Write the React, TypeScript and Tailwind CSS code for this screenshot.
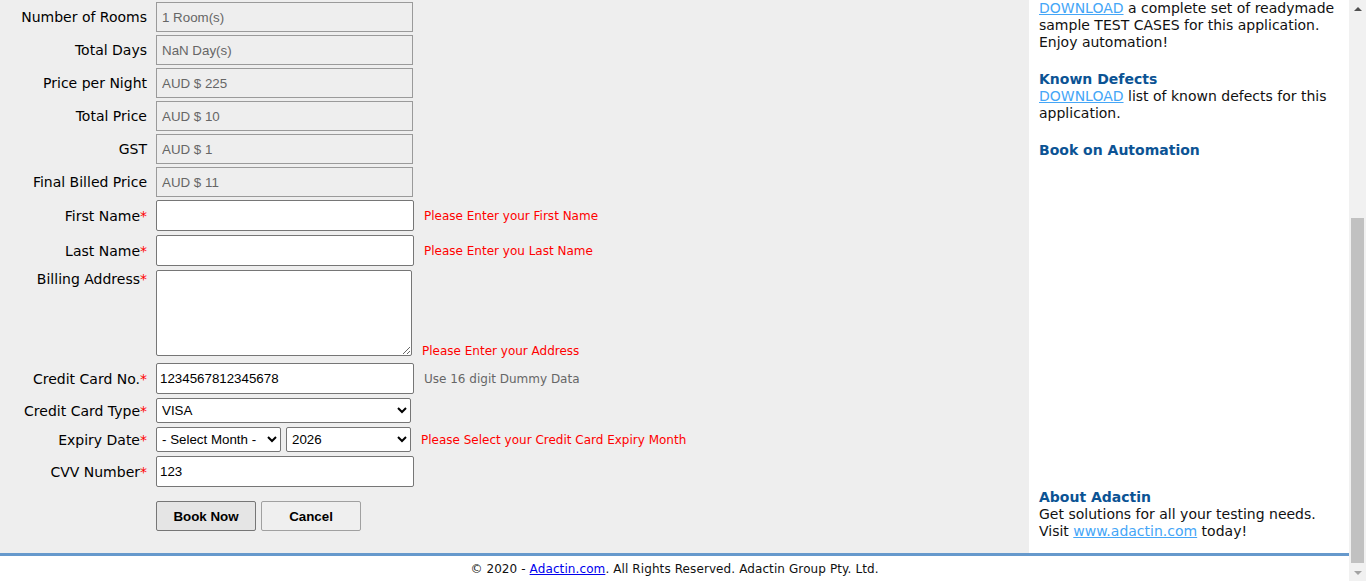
import type { ReactNode } from 'react'

// Booking form page: gray form area on the left, white info column on
// the right, blue rule + footer below, and a classic scrollbar at the edge.

const inputFont = "font-['Liberation_Sans',Arial,sans-serif] text-[13.333px]"

function Label({
  children,
  required,
  className,
}: {
  children: ReactNode
  required?: boolean
  className?: string
}) {
  return (
    <div className={`w-[147px] shrink-0 text-right text-[14px] leading-[17px] text-black ${className ?? ''}`}>
      {children}
      {required && <span className="text-[#ff0000]">*</span>}
    </div>
  )
}

function ReadOnlyRow({ label, value, first }: { label: string; value: string; first?: boolean }) {
  return (
    <div className={`flex items-center gap-[9px] ${first ? '' : 'mt-[3px]'}`}>
      <Label>{label}</Label>
      <input
        readOnly
        value={value}
        className={`h-[30px] w-[257px] border border-[#9a9a9a] bg-[#eeeeee] pl-[5px] text-[#666] outline-none ${inputFont}`}
      />
    </div>
  )
}

function Hint({ children, className }: { children: ReactNode; className?: string }) {
  return <span className={`text-[12px] leading-[15px] ${className ?? ''}`}>{children}</span>
}

const textInput = `h-[31px] w-[258px] rounded-[2px] border border-[#767676] bg-white pl-[3px] text-black outline-none ${inputFont}`
const selectBox = `h-[25px] rounded-[2px] border border-[#767676] bg-white pl-[1px] text-black outline-none ${inputFont}`

function BookingForm() {
  return (
    <div className="flex flex-col pt-[2px]">
      <ReadOnlyRow first label="Number of Rooms" value="1 Room(s)" />
      <ReadOnlyRow label="Total Days" value="NaN Day(s)" />
      <ReadOnlyRow label="Price per Night" value="AUD $ 225" />
      <ReadOnlyRow label="Total Price" value="AUD $ 10" />
      <ReadOnlyRow label="GST" value="AUD $ 1" />
      <ReadOnlyRow label="Final Billed Price" value="AUD $ 11" />

      <div className="mt-[3px] flex items-center gap-[9px]">
        <Label required className="mt-[2px]">First Name</Label>
        <div className="flex items-center">
          <input className={textInput} defaultValue="" />
          <Hint className="ml-[10px] mt-[2px] text-[#ff0000]">Please Enter your First Name</Hint>
        </div>
      </div>

      <div className="mt-[4px] flex items-center gap-[9px]">
        <Label required className="mt-[2px]">Last Name</Label>
        <div className="flex items-center">
          <input className={textInput} defaultValue="" />
          <Hint className="ml-[10px] mt-[2px] text-[#ff0000]">Please Enter you Last Name</Hint>
        </div>
      </div>

      <div className="mt-[4px] flex items-start gap-[9px]">
        <Label required className="pt-[1px]">Billing Address</Label>
        <div className="flex items-end">
          <textarea
            className={`block h-[86px] w-[256px] rounded-[2px] border border-[#767676] bg-white text-black outline-none ${inputFont}`}
          />
          <Hint className="mb-[-3px] ml-[10px] text-[#ff0000]">Please Enter your Address</Hint>
        </div>
      </div>

      <div className="mt-[7px] flex items-center gap-[9px]">
        <Label required className="mt-[2px]">Credit Card No.</Label>
        <div className="flex items-center">
          <input className={textInput} defaultValue="1234567812345678" />
          <Hint className="ml-[10px] mt-[2px] text-[#666]">Use 16 digit Dummy Data</Hint>
        </div>
      </div>

      <div className="mt-[4px] flex items-center gap-[9px]">
        <Label required className="mt-[2px]">Credit Card Type</Label>
        <select className={`${selectBox} w-[255px]`} defaultValue="VISA">
          <option>- Select Credit Card Type -</option>
          <option>American Express</option>
          <option>VISA</option>
          <option>Master Card</option>
          <option>Other</option>
        </select>
      </div>

      <div className="mt-[4px] flex items-center gap-[9px]">
        <Label required className="mt-[2px]">Expiry Date</Label>
        <div className="flex items-center">
          <select className={`${selectBox} w-[125px]`} defaultValue="">
            <option value="">- Select Month -</option>
            <option>January</option>
            <option>February</option>
          </select>
          <select className={`${selectBox} ml-[5px] w-[125px]`} defaultValue="2026">
            <option>- Select Year -</option>
            <option>2026</option>
            <option>2027</option>
          </select>
          <Hint className="ml-[10px] mt-[2px] text-[#ff0000]">Please Select your Credit Card Expiry Month</Hint>
        </div>
      </div>

      <div className="mt-[4px] flex items-center gap-[9px]">
        <Label required className="mt-[2px]">CVV Number</Label>
        <input className={textInput} defaultValue="123" />
      </div>

      <div className="mt-[14px] flex items-center gap-[9px]">
        <div className="w-[147px] shrink-0" />
        <div className={`flex gap-[5px] font-bold ${inputFont}`}>
          <button
            type="button"
            className="h-[30px] w-[100px] rounded-[2px] border border-[#767676] bg-[#e5e5e5] pt-[2px] text-black"
          >
            Book Now
          </button>
          <button
            type="button"
            className="h-[30px] w-[100px] rounded-[2px] border border-[#a0a0a0] bg-[#efefef] pt-[2px] text-black"
          >
            Cancel
          </button>
        </div>
      </div>
    </div>
  )
}

function Sidebar() {
  const link = 'text-[#45a6f7] underline'
  const heading = 'font-bold text-[#0b5394]'
  return (
    <aside className="flex w-[320px] shrink-0 flex-col justify-between bg-white pb-[13px] pl-[10px] pr-[10px] text-[14px] leading-[17px] text-[#111]">
      <div>
        <p>
          <a className={link}>DOWNLOAD</a> a complete set of readymade sample TEST CASES for this
          application. Enjoy automation!
        </p>
        <h3 className={`mt-[20px] ${heading}`}>Known Defects</h3>
        <p>
          <a className={link}>DOWNLOAD</a> list of known defects for this application.
        </p>
        <h3 className={`mt-[20px] ${heading}`}>Book on Automation</h3>
      </div>
      <div>
        <h3 className={heading}>About Adactin</h3>
        <p>
          Get solutions for all your testing needs. Visit <a className={link}>www.adactin.com</a> today!
        </p>
      </div>
    </aside>
  )
}

function Scrollbar() {
  return (
    <div className="flex w-[17px] shrink-0 flex-col bg-[#f1f1f1]">
      <div className="flex h-[17px] items-center justify-center">
        <div className="h-0 w-0 border-x-[4px] border-b-[4px] border-x-transparent border-b-[#505050]" />
      </div>
      <div className="h-[201px]" />
      <div className="mx-[2px] h-[345px] bg-[#c1c1c1]" />
      <div className="h-[1px]" />
      <div className="flex h-[17px] items-center justify-center">
        <div className="h-0 w-0 border-x-[4px] border-t-[4px] border-x-transparent border-t-[#a3a3a3]" />
      </div>
    </div>
  )
}

export default function App() {
  return (
    <div className="flex h-[581px] w-full overflow-hidden font-['DejaVu_Sans',Verdana,sans-serif]">
      <div className="flex min-w-0 flex-1 flex-col">
        <div className="flex h-[553px]">
          <main className="min-w-0 flex-1 bg-[#eeeeee]">
            <BookingForm />
          </main>
          <Sidebar />
        </div>
        <div className="h-[3px] bg-[#6699cc]" />
        <footer className="flex-1 bg-white pt-[6px] text-center text-[12px] leading-[15px] tracking-[0.1px] text-[#111]">
          © 2020 - <a className="text-[#0000ee] underline">Adactin.com</a>. All Rights Reserved. Adactin
          Group Pty. Ltd.
        </footer>
      </div>
      <Scrollbar />
    </div>
  )
}
